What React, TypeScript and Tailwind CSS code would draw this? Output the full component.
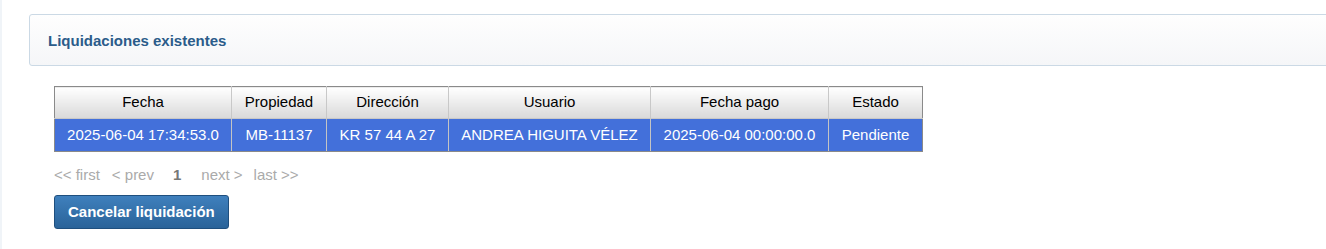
import React from "react";

type Liquidacion = {
	fecha: string;
	propiedad: string;
	direccion: string;
	usuario: string;
	fechaPago: string;
	estado: string;
};

const columns = [
	{ label: "Fecha", width: "w-[177px]" },
	{ label: "Propiedad", width: "w-[95px]" },
	{ label: "Dirección", width: "w-[122px]" },
	{ label: "Usuario", width: "w-[202px]" },
	{ label: "Fecha pago", width: "w-[178px]" },
	{ label: "Estado", width: "w-[94px]" },
];

const rows: Liquidacion[] = [
	{
		fecha: "2025-06-04 17:34:53.0",
		propiedad: "MB-11137",
		direccion: "KR 57 44 A 27",
		usuario: "ANDREA HIGUITA VÉLEZ",
		fechaPago: "2025-06-04 00:00:00.0",
		estado: "Pendiente",
	},
];

const App: React.FC = () => {
	return (
		<div className="w-full h-[249px] overflow-hidden bg-white border-l-2 border-[#f0f4f8] font-['Liberation_Sans',Arial,sans-serif]">
			{/* Panel header */}
			<div className="mt-[14px] ml-[27px] -mr-[10px] h-[52px] rounded-[3px] border border-[#cbd9e5] bg-gradient-to-b from-[#fefefe] to-[#f5f6f8] flex items-center pl-[18px]">
				<h3 className="text-[15px] font-bold text-[#2b5c8a] leading-none">
					Liquidaciones existentes
				</h3>
			</div>

			<div className="pl-[52px] pt-[20px]">
				{/* Table */}
				<table className="border-collapse border border-[#8a8a8a] text-[15px]">
					<thead>
						<tr>
							{columns.map((col) => (
								<th
									key={col.label}
									className={`${col.width} h-[32px] p-0 font-normal text-black text-center border border-[#c8c8c8] first:border-l-[#8a8a8a] last:border-r-[#8a8a8a] border-t-[#8a8a8a] bg-gradient-to-b from-[#ffffff] to-[#d9d9d9]`}
								>
									{col.label}
								</th>
							))}
						</tr>
					</thead>
					<tbody>
						{rows.map((row) => (
							<tr key={row.propiedad} className="bg-[#4370da] text-white">
								<td className="h-[33px] p-0 text-center border border-[#c4c4c4] border-l-[#8a8a8a] border-b-[#8a8a8a]">{row.fecha}</td>
								<td className="p-0 text-center border border-[#c4c4c4] border-b-[#8a8a8a]">{row.propiedad}</td>
								<td className="p-0 text-center border border-[#c4c4c4] border-b-[#8a8a8a]">{row.direccion}</td>
								<td className="p-0 text-center border border-[#c4c4c4] border-b-[#8a8a8a]">{row.usuario}</td>
								<td className="p-0 text-center border border-[#c4c4c4] border-b-[#8a8a8a]">{row.fechaPago}</td>
								<td className="p-0 text-center border border-[#c4c4c4] border-b-[#8a8a8a] border-r-[#8a8a8a]">{row.estado}</td>
							</tr>
						))}
					</tbody>
				</table>

				{/* Pagination */}
				<div className="mt-[12px] h-[20px] flex items-center text-[15px] text-[#aaaaaa] leading-none">
					<span>&lt;&lt; first</span>
					<span className="ml-[12px]">&lt; prev</span>
					<span className="ml-[19px] font-bold text-[#777777]">1</span>
					<span className="ml-[20px]">next &gt;</span>
					<span className="ml-[11px]">last &gt;&gt;</span>
				</div>

				{/* Actions */}
				<button className="mt-[11px] h-[34px] px-[13px] rounded-[3px] border border-[#1f4f7e] bg-gradient-to-b from-[#3f80bd] to-[#2a6399] text-white text-[15px] font-bold">
					Cancelar liquidación
				</button>
			</div>
		</div>
	);
};

export default App;
